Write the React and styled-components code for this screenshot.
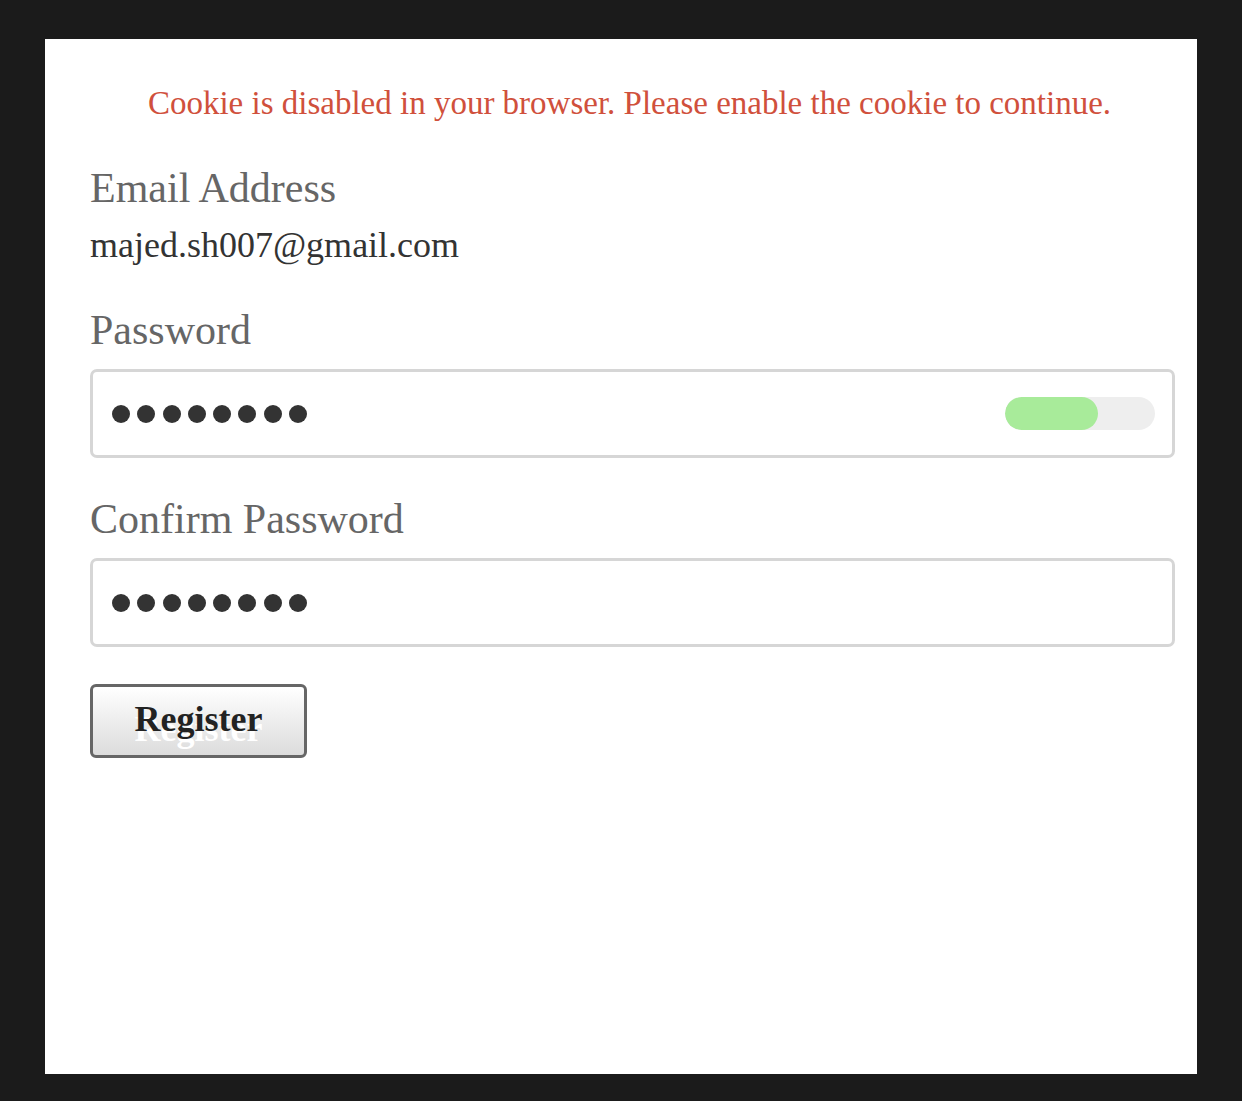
import React from 'react';
import styled, { createGlobalStyle } from 'styled-components';

const GlobalStyle = createGlobalStyle`
  html, body {
    margin: 0;
    padding: 0;
    background: #1b1b1b;
  }
  body {
    font-family: "Liberation Serif", "Times New Roman", serif;
  }
`;

const Page = styled.div`
  padding: 39px 45px 27px 45px;
`;

const Panel = styled.div`
  background: #fff;
  width: 1152px;
  height: 1035px;
  box-sizing: border-box;
  padding: 46px 22px 0 45px;
`;

const Notice = styled.p`
  margin: 0 6px 0 0;
  text-align: center;
  color: #d0503c;
  font-size: 33px;
  line-height: 36px;
`;

const Label = styled.div`
  color: #666;
  font-size: 42px;
  line-height: 46px;
  margin-top: ${(p) => p.$top}px;
`;

const Value = styled.div`
  color: #333;
  font-size: 36px;
  line-height: 40px;
  margin-top: 14px;
`;

const Field = styled.div`
  margin-top: 16px;
  height: 89px;
  box-sizing: border-box;
  border: 3px solid #d6d6d6;
  border-radius: 7px;
  display: flex;
  align-items: center;
  justify-content: space-between;
  padding: 0 17px 0 19px;
`;

const Dots = styled.div`
  display: flex;
  gap: 7.3px;
`;

const Dot = styled.span`
  width: 18px;
  height: 18px;
  border-radius: 50%;
  background: #333;
`;

const Meter = styled.div`
  width: 150px;
  height: 33px;
  border-radius: 17px;
  background: #eeeeee;
  overflow: hidden;
`;

const MeterFill = styled.div`
  height: 100%;
  border-radius: 17px;
  background: #a8eb9a;
`;

const Button = styled.button`
  margin-top: 37px;
  width: 217px;
  height: 74px;
  box-sizing: border-box;
  border: 3px solid #666;
  border-radius: 6px;
  background: linear-gradient(#ffffff, #dcdcdc);
  font-family: "Liberation Serif", "Times New Roman", serif;
  font-weight: bold;
  font-size: 36px;
  color: #222;
  text-shadow: 0 10px 0 #fff;
  padding: 0 0 4px 0;
  cursor: pointer;
`;

function Masked({ count }) {
  return (
    <Dots>
      {Array.from({ length: count }).map((_, i) => (
        <Dot key={i} />
      ))}
    </Dots>
  );
}

export default function App() {
  const strength = 62;
  return (
    <>
      <GlobalStyle />
      <Page>
        <Panel>
          <Notice>Cookie is disabled in your browser. Please enable the cookie to continue.</Notice>
          <Label $top={44}>Email Address</Label>
          <Value>majed.sh007@gmail.com</Value>
          <Label $top={42}>Password</Label>
          <Field>
            <Masked count={8} />
            <Meter>
              <MeterFill style={{ width: `${strength}%` }} />
            </Meter>
          </Field>
          <Label $top={38}>Confirm Password</Label>
          <Field>
            <Masked count={8} />
          </Field>
          <Button>Register</Button>
        </Panel>
      </Page>
    </>
  );
}
